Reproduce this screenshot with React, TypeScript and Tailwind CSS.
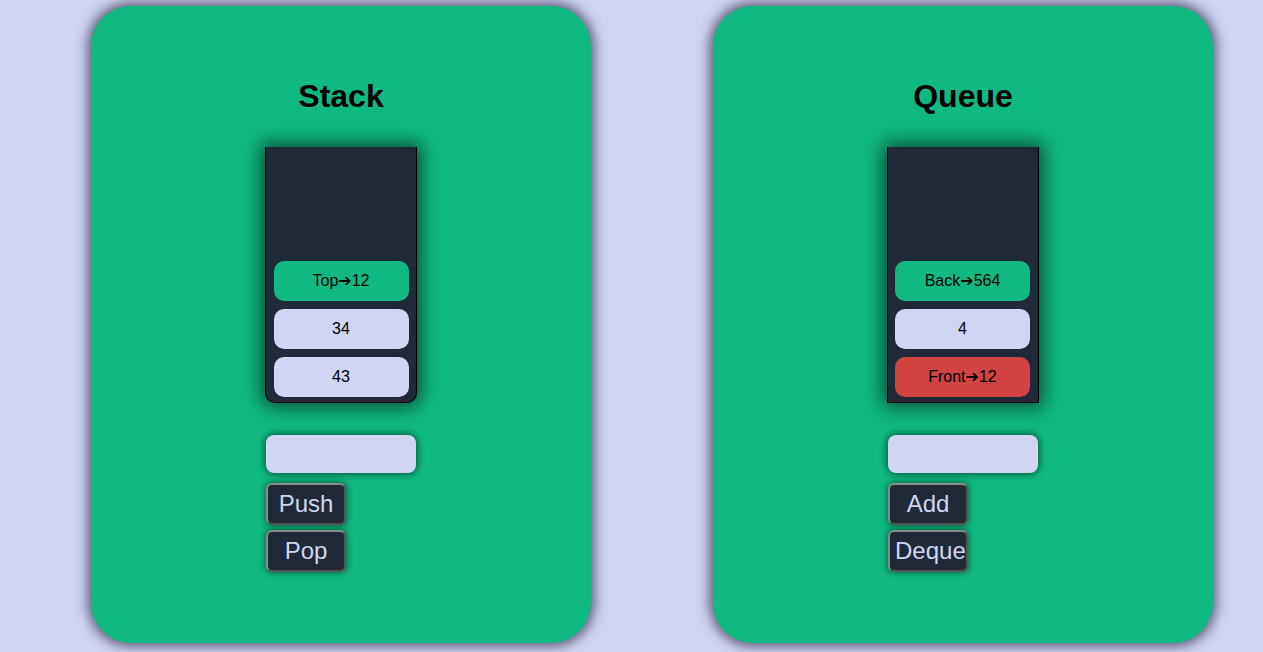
import React from 'react'

type Item = { label: string; tone: 'top' | 'plain' | 'front' }

const toneClass: Record<Item['tone'], string> = {
  top: 'bg-[#10b981]',
  plain: 'bg-[#d1d5f4]',
  front: 'bg-[#d14343]',
}

function Panel({
  title,
  items,
  rounded,
  actions,
}: {
  title: string
  items: Item[]
  rounded: boolean
  actions: string[]
}) {
  return (
    <div className="w-[500px] h-[637px] shrink-0 rounded-[40px] bg-[#10b981] shadow-[0_0_12px_4px_rgba(70,68,95,0.8)] flex flex-col items-center pt-[72px]">
      <h1 className="text-[32px] leading-[36px] font-bold text-black">{title}</h1>
      <div className="w-[150px] mt-[33px] flex flex-col">
        <div
          className={
            'w-[152px] -ml-px h-[256px] bg-[#1f2937] border border-black border-t-0 flex flex-col items-center justify-end gap-2 pb-[5px] shadow-[0_0_18px_4px_rgba(0,0,0,0.6)] ' +
            (rounded ? 'rounded-b-[10px]' : 'pr-px')
          }
        >
          {items.map((it) => (
            <div
              key={it.label}
              className={'w-[135px] h-10 rounded-[10px] flex items-center justify-center text-base text-black ' + toneClass[it.tone]}
            >
              {it.label}
            </div>
          ))}
        </div>
        <input className="mt-8 w-[150px] h-[38px] rounded-lg bg-[#d1d5f4] shadow-[0_0_6px_2px_rgba(0,0,0,0.45)] outline-none" />
        <div className="mt-[10px] flex flex-col gap-[5px]">
          {actions.map((a) => (
            <button
              key={a}
              className="w-20 h-[42px] rounded-md bg-[#1f2937] border-2 border-t-[#8a8a8a] border-l-[#8a8a8a] border-r-[#555] border-b-[#555] text-[24px] text-[#d1d5f4] flex items-center justify-center-safe px-[5px] whitespace-nowrap overflow-visible shadow-[0_0_6px_1px_rgba(0,0,0,0.45)]"
            >
              {a}
            </button>
          ))}
        </div>
      </div>
    </div>
  )
}

export default function App() {
  return (
    <div className="w-[1263px] h-[652px] bg-[#d1d5f4] flex items-start pt-[6px] pl-[91px] gap-[122px] overflow-hidden font-['Liberation_Sans','DejaVu_Sans',sans-serif]">
      <Panel
        title="Stack"
        rounded
        items={[
          { label: 'Top➔12', tone: 'top' },
          { label: '34', tone: 'plain' },
          { label: '43', tone: 'plain' },
        ]}
        actions={['Push', 'Pop']}
      />
      <Panel
        title="Queue"
        rounded={false}
        items={[
          { label: 'Back➔564', tone: 'top' },
          { label: '4', tone: 'plain' },
          { label: 'Front➔12', tone: 'front' },
        ]}
        actions={['Add', 'Deque']}
      />
    </div>
  )
}
